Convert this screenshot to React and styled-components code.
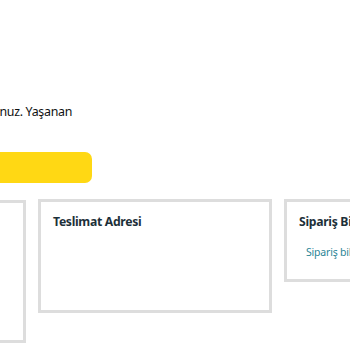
import React from "react";
import styled, { createGlobalStyle } from "styled-components";

const Global = createGlobalStyle`
  html, body { margin: 0; padding: 0; background: #ffffff; }
  body { font-family: "Noto Sans", "Open Sans", Arial, sans-serif; overflow: hidden; }
`;

const Page = styled.div`
  width: 350px;
  height: 350px;
  overflow: hidden;
  padding-top: 102px;
  box-sizing: border-box;
`;

const Intro = styled.p`
  margin: 0 0 0 -628px;
  width: 700px;
  text-align: right;
  white-space: nowrap;
  font-size: 12.4px;
  letter-spacing: -0.3px;
  line-height: 19px;
  color: #0f1111;
`;

const PrimaryButton = styled.button`
  display: block;
  margin: 31px 0 0 -208px;
  width: 300px;
  height: 31px;
  border: none;
  border-radius: 7px;
  background: #ffd814;
`;

const CardRow = styled.div`
  display: flex;
  align-items: flex-start;
  gap: 12px;
  margin: 16px 0 0 -208px;
`;

const Card = styled.section`
  flex: 0 0 234px;
  box-sizing: border-box;
  height: ${(p) => p.$height}px;
  border: 3px solid #dddddd;
  padding: 10px 12px;
  margin-top: ${(p) => p.$offset || 0}px;
`;

const CardTitle = styled.h3`
  margin: 0;
  font-size: 12.2px;
  letter-spacing: -0.3px;
  line-height: 20px;
  font-weight: 700;
  color: #1d3039;
  white-space: nowrap;
`;

const CardLink = styled.a`
  display: block;
  margin: 12px 0 0 7px;
  font-size: 10.5px;
  letter-spacing: -0.2px;
  line-height: 16px;
  color: #2a8596;
  text-decoration: none;
  white-space: nowrap;
`;

export default function App() {
  return (
    <Page>
      <Global />
      <Intro>Siparişinizle ilgili bir sorun yaşadığınızı düşünüyorsunuz. Yaşanan</Intro>
      <PrimaryButton aria-label="Devam" />
      <CardRow>
        <Card $height={143} $offset={1} />
        <Card $height={114}>
          <CardTitle>Teslimat Adresi</CardTitle>
        </Card>
        <Card $height={83}>
          <CardTitle>Sipariş Bilgileri</CardTitle>
          <CardLink href="#">Sipariş bilgilerini görüntüle</CardLink>
        </Card>
      </CardRow>
    </Page>
  );
}
